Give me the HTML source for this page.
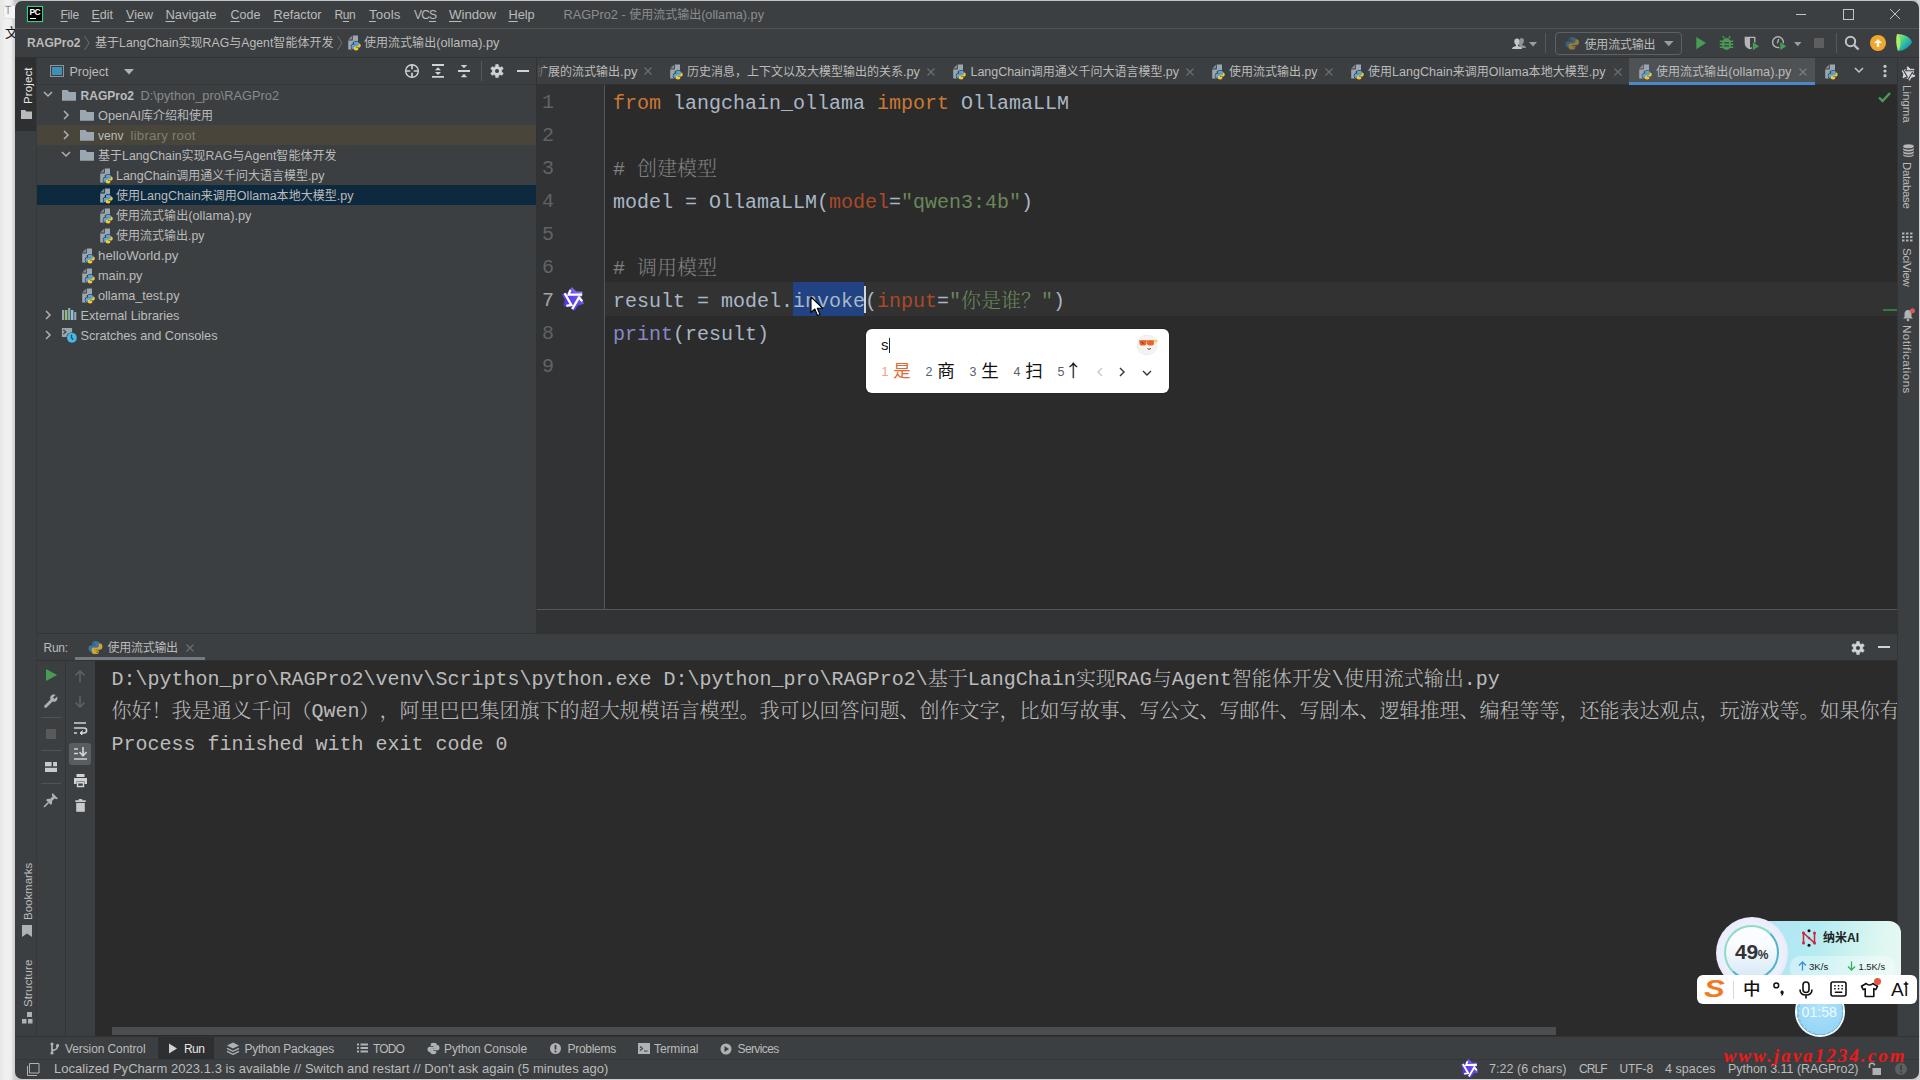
<!DOCTYPE html>
<html lang="zh"><head><meta charset="utf-8"><title>RAGPro2 - 使用流式输出(ollama).py</title>
<style>
html,body{margin:0;padding:0}
body{width:1920px;height:1080px;overflow:hidden;position:relative;background:#ebebeb;font-family:"Liberation Sans","Noto Sans CJK SC",sans-serif;font-size:12.5px;color:#bbb;text-spacing-trim:space-all}
#desk{position:absolute;left:0;top:0;width:1920px;height:1080px;background:linear-gradient(90deg,#e6e6e6 0,#f1f1f1 6px,#eeeeee 11px,#cbcbcb 15px,#cdcecf 15px)}
#win{position:absolute;left:15px;top:1px;width:1904px;height:1077.5px;border-radius:7px;background:#3c3f41;overflow:hidden}
#in{position:absolute;left:-15px;top:-1px;width:1920px;height:1080px}
.r{position:absolute;display:block}
.t{position:absolute;white-space:pre;color:#bbb;font-size:12.5px}
.c{font-size:12px}
.b{font-weight:bold}
.g{color:#8a8a8a}
.m{font-family:"Liberation Mono","Noto Serif CJK SC",monospace;font-size:20px;font-weight:300}
.m .c{font-size:20px;position:relative;top:1.200px}
.u{text-decoration:underline;text-underline-offset:1.5px;text-decoration-thickness:1px}
.k{color:#cc7832}.s{color:#6a8759}.cm{color:#808080}.p{color:#aa4926}.bi{color:#8888c6}
.code{color:#a9b7c6}
.v{position:absolute;white-space:pre;font-size:12px;color:#bbb;line-height:16px;transform-origin:0 0}
</style></head><body>
<div id="desk"></div><div class="r" style="left:14px;top:0;width:1906px;height:2px;background:#c2c3c7"></div><div class="r" style="left:14px;top:1077px;width:1906px;height:3px;background:#cdcecf"></div><div class="r" style="left:1917px;top:0;width:3px;height:1080px;background:#d2d3d5"></div>
<div class="r" style="left:3px;top:5px;width:11px;height:12px;border:1px solid #e0e0e0;border-radius:2px;background:#f4f4f4"></div>
<div class="t" style="left:5px;top:4px;line-height:14px;font-size:10px;color:#8a8a8a">T</div>
<div class="t" style="left:5px;top:25px;line-height:16px;font-size:13px;color:#111;width:10px;overflow:hidden"><span style="font-size:13px">文</span></div>
<div id="win"><div id="in">
<div class="r" style="left:15px;top:28px;width:1905px;height:1px;background:#515354;"></div>
<div class="r" style="left:27px;top:6px;width:14px;height:14px;border:1px solid #3ec98d;background:#000;box-shadow:0 0 0 .5px #1d6f50"></div>
<div class="t b" style="left:29.500px;top:8.300px;line-height:8px;font-size:8.500px;color:#fff;letter-spacing:-.6px">PC</div>
<div class="r" style="left:30px;top:17.5px;width:6px;height:1.2px;background:#fff;"></div>
<div class="t " style="left:60.5px;top:5.0px;line-height:20px;;font-size:12.0px;letter-spacing:-0.246px"><span class="u">F</span>ile</div>
<div class="t " style="left:91.5px;top:5.0px;line-height:20px;;font-size:12.5px;letter-spacing:-0.013px"><span class="u">E</span>dit</div>
<div class="t " style="left:126px;top:5.0px;line-height:20px;;font-size:12.5px;letter-spacing:0.031px"><span class="u">V</span>iew</div>
<div class="t " style="left:165.5px;top:5.0px;line-height:20px;;font-size:13.0px;letter-spacing:-0.042px"><span class="u">N</span>avigate</div>
<div class="t " style="left:230.5px;top:5.0px;line-height:20px;;font-size:12.5px;letter-spacing:0.031px"><span class="u">C</span>ode</div>
<div class="t " style="left:273.5px;top:5.0px;line-height:20px;;font-size:12.75px;letter-spacing:-0.027px"><span class="u">R</span>efactor</div>
<div class="t " style="left:334.5px;top:5.0px;line-height:20px;;font-size:12.0px;letter-spacing:-0.419px">R<span class="u">u</span>n</div>
<div class="t " style="left:369px;top:5.0px;line-height:20px;;font-size:13.25px;letter-spacing:0.125px"><span class="u">T</span>ools</div>
<div class="t " style="left:414px;top:5.0px;line-height:20px;;font-size:12.0px;letter-spacing:-0.875px">VC<span class="u">S</span></div>
<div class="t " style="left:449px;top:5.0px;line-height:20px;;font-size:13.25px;letter-spacing:-0.026px"><span class="u">W</span>indow</div>
<div class="t " style="left:508.5px;top:5.0px;line-height:20px;;font-size:12.75px;letter-spacing:-0.067px"><span class="u">H</span>elp</div>
<div class="t " style="left:563.5px;top:5.0px;line-height:20px;color:#8b8d8e;font-size:12.75px;letter-spacing:-0.018px">RAGPro2 - <span class="c">使用流式输出</span>(ollama).py</div>
<div class="r" style="left:1796px;top:14px;width:10px;height:1px;background:#c4c4c4;"></div>
<div class="r" style="left:1843px;top:9px;width:8.6px;height:8.6px;border:1px solid #c4c4c4"></div>
<svg class="r" style="left:1890px;top:9px;" width="10" height="10" viewBox="0 0 10 10"><path d="M0 0 L10 10 M10 0 L0 10" stroke="#c4c4c4" stroke-width="1"/></svg>
<div class="r" style="left:15px;top:57px;width:1905px;height:1px;background:#323232;"></div>
<div class="t b" style="left:27px;top:33.0px;line-height:20px;;font-size:12.0px;letter-spacing:0.024px">RAGPro2</div>
<svg class="r" style="left:83px;top:35px;" width="8" height="16" viewBox="0 0 8 16"><path d="M1.500 1 L6 8 L1.500 15" fill="none" stroke="#6b6e70" stroke-width="1"/></svg>
<div class="t " style="left:95px;top:33.0px;line-height:20px;;font-size:12.25px;letter-spacing:0.023px"><span class="c">基于</span>LangChain<span class="c">实现</span>RAG<span class="c">与</span>Agent<span class="c">智能体开发</span></div>
<svg class="r" style="left:336px;top:35px;" width="8" height="16" viewBox="0 0 8 16"><path d="M1.500 1 L6 8 L1.500 15" fill="none" stroke="#6b6e70" stroke-width="1"/></svg>
<svg class="r" style="left:347px;top:35px;" width="16" height="16" viewBox="0 0 16 16"><path d="M1.200 4.600 L5 .8 V4.600 Z" fill="#9aa7b0" opacity=".75"/><path d="M5.800 .6 H11 V7 H5.800 V14.500 H1.200 V5.400 H5.800 Z" fill="#9aa7b0"/><g transform="translate(4.200 6.200) scale(.62)"><path d="M7.900 1 C5 1 4.600 2.200 4.600 3.300 V5 h3.500 v.7 H3.200 C1.800 5.700 .6 6.800 .6 9 s1.100 3.300 2.400 3.300 h1.400 v-1.900 c0-1.400 1.100-2.500 2.500-2.500 h3.200 c1.100 0 2-.9 2-2 V3.300 C12.100 2.200 11 1 7.900 1z" fill="#5aa3d6" stroke="#3c3f41" stroke-width="2.600" paint-order="stroke"/><path d="M8.100 15 c2.900 0 3.300-1.200 3.300-2.300 V11 H7.900 v-.7 h4.900 c1.400 0 2.600-1.100 2.600-3.300 s-1.100-3.300-2.400-3.300 h-1.400 v1.900 c0 1.400-1.100 2.500-2.500 2.500 H5.900 c-1.100 0-2 .9-2 2 v2.600 C3.900 13.800 5 15 8.100 15z" fill="#f1c83c" stroke="#3c3f41" stroke-width="1.200" paint-order="stroke"/><path d="M7.900 1 C5 1 4.600 2.200 4.600 3.300 V5 h3.500 v.7 H3.200 C1.800 5.700 .6 6.800 .6 9 s1.100 3.300 2.400 3.300 h1.400 v-1.900 c0-1.400 1.100-2.500 2.500-2.500 h3.200 c1.100 0 2-.9 2-2 V3.300 C12.100 2.200 11 1 7.900 1z" fill="#5aa3d6"/></g></svg>
<div class="t " style="left:364px;top:33.0px;line-height:20px;;font-size:12.75px;letter-spacing:0.026px"><span class="c">使用流式输出</span>(ollama).py</div>
<svg class="r" style="left:1510.8px;top:36px;" width="16" height="15" viewBox="0 0 16 15"><path d="M10.500 2 c1.600 0 2.500 1.300 2.500 2.800 s-.8 3-1.800 3.400 v.8 c2 .4 3.800 1.300 3.800 3 H9.500 c0-1.500-.8-2.500-2-3 .9-.8 1-2 1-3.400 C8.500 4 9 2 10.500 2z" fill="#8f9294"/><path d="M6 2.500 c1.700 0 2.700 1.300 2.700 3 s-.9 3.200-1.700 3.600 v.8 c2.200 .5 4 1.300 4 3.100 H1 c0-1.800 1.800-2.600 4-3.100 v-.8 C4.200 8.700 3.300 7.200 3.300 5.500 s1-3 2.700-3z" fill="#c4c6c8"/></svg>
<svg class="r" style="left:1529px;top:41.8px;" width="8" height="5" viewBox="0 0 8 5"><path d="M0 0 H8 L4 4.500 Z" fill="#9a9da0"/></svg>
<div class="r" style="left:1545px;top:33px;width:1px;height:20px;background:#555759;"></div>
<div class="r" style="left:1555px;top:32px;width:125px;height:20.500px;border:1px solid #5e6163;border-radius:4px"></div>
<svg class="r" style="left:1564.5px;top:36px;opacity:0.5;" width="14.5" height="14.5" viewBox="0 0 16 16"><path d="M7.9 1 C5 1 4.6 2.2 4.6 3.3 V5 h3.5 v.7 H3.2 C1.8 5.700 .6 6.800 .6 9 s1.100 3.300 2.400 3.300 h1.400 v-1.900 c0-1.400 1.100-2.500 2.500-2.500 h3.200 c1.100 0 2-.9 2-2 V3.300 C12.100 2.200 11 1 7.900 1z" fill="#3d7fb5"/><circle cx="6.2" cy="3" r=".7" fill="#3c3f41"/><path d="M8.100 15 c2.900 0 3.300-1.200 3.300-2.300 V11 H7.900 v-.7 h4.900 c1.400 0 2.600-1.100 2.600-3.300 s-1.100-3.300-2.400-3.300 h-1.400 v1.900 c0 1.400-1.100 2.500-2.500 2.500 H5.900 c-1.100 0-2 .9-2 2 v2.600 C3.900 13.800 5 15 8.100 15z" fill="#e5b93a"/><circle cx="9.8" cy="13" r=".7" fill="#3c3f41"/></svg>
<div class="t " style="left:1584.5px;top:35.0px;line-height:20px;;font-size:12.5px;letter-spacing:-0.185px"><span class="c">使用流式输出</span></div>
<svg class="r" style="left:1663.5px;top:41px;" width="10" height="6" viewBox="0 0 10 6"><path d="M0 0 H9.500 L4.750 5.200 Z" fill="#9a9da0"/></svg>
<svg class="r" style="left:1695.5px;top:37px;" width="11" height="12.5" viewBox="0 0 11 12.5"><path d="M.3 0 L10 6.100 L.3 12.200 Z" fill="#499c54"/></svg>
<svg class="r" style="left:1719px;top:35px;" width="15" height="16" viewBox="0 0 15 16"><path d="M5.300 3.300 L3.800 1 M9.700 3.300 L11.200 1" stroke="#499c54" stroke-width="1.300"/><ellipse cx="7.500" cy="9" rx="4.500" ry="6" fill="#499c54"/><path d="M.8 6.300 H4 M.8 9.300 H4 M.8 12.300 H4 M11 6.300 H14.200 M11 9.300 H14.200 M11 12.300 H14.200" stroke="#499c54" stroke-width="1.500"/><path d="M5 7.800 H10 M5 10.800 H10" stroke="#3c3f41" stroke-width="1.300"/></svg>
<svg class="r" style="left:1744px;top:36px;" width="17" height="16" viewBox="0 0 17 16"><path d="M1.300 1.300 H10.800 V6.500 C10.800 9.500 8.500 11.800 6 12.600 C3.500 11.800 1.300 9.500 1.300 6.500 Z" fill="#3c3f41" stroke="#b4b6b8" stroke-width="1.300"/><path d="M1.300 1.300 H6 V12.600 C3.500 11.800 1.300 9.500 1.300 6.500 Z" fill="#b4b6b8"/><path d="M8.300 5.500 L16 10.200 L8.300 15 Z" fill="#499c54" stroke="#3c3f41" stroke-width="1"/></svg>
<svg class="r" style="left:1771px;top:35px;" width="17" height="17" viewBox="0 0 17 17"><circle cx="7" cy="7.200" r="5.400" fill="none" stroke="#b4b6b8" stroke-width="1.400"/><path d="M7.800 4 L6.300 8.300" fill="none" stroke="#b4b6b8" stroke-width="1.300"/><path d="M8.800 6.500 L16 11.200 L8.800 16 Z" fill="#499c54" stroke="#3c3f41" stroke-width="1"/></svg>
<svg class="r" style="left:1793.5px;top:42px;" width="8" height="5" viewBox="0 0 8 5"><path d="M0 0 H7.500 L3.750 4.200 Z" fill="#9a9da0"/></svg>
<div class="r" style="left:1814px;top:38px;width:10px;height:10px;background:#5c5e60;"></div>
<div class="r" style="left:1835.5px;top:33px;width:1px;height:20px;background:#555759;"></div>
<svg class="r" style="left:1844px;top:35px;" width="16" height="16" viewBox="0 0 16 16"><circle cx="6.500" cy="6.500" r="4.700" fill="none" stroke="#c0c2c4" stroke-width="2"/><path d="M10 10 L14.500 14.500" stroke="#c0c2c4" stroke-width="2.400"/></svg>
<div class="r" style="left:1870px;top:34.5px;width:16px;height:16px;border-radius:50%;background:#f0a732"></div>
<svg class="r" style="left:1873px;top:38px;" width="10" height="10" viewBox="0 0 10 10"><path d="M5 1 L9 5 H6.200 V9 H3.800 V5 H1 Z" fill="#fff8e0"/></svg>
<svg class="r" style="left:1895px;top:33px;" width="18" height="19" viewBox="0 0 18 19"><defs><linearGradient id="cg" x1="0" y1="0" x2="1" y2="1"><stop offset="0" stop-color="#b7ec5a"/><stop offset=".5" stop-color="#2fc3a0"/><stop offset="1" stop-color="#1767c9"/></linearGradient></defs><path d="M2 1 C10 1 16 5 17 9.500 C14 14 9 18 3 18 C1 12 1 6 2 1z" fill="url(#cg)"/><path d="M2 1 C6 5 7 12 3 18 C1 12 1 6 2 1z" fill="#c6f25e" opacity=".8"/></svg>
<div class="r" style="left:15px;top:58px;width:21.3px;height:73px;background:#2d2f30;"></div>
<div class="v" style="left:19.5px;top:103.5px;transform:rotate(-90deg);font-size:11.5px;letter-spacing:0.124px;color:#e8e8e8">Project</div>
<svg class="r" style="left:21px;top:110px;" width="11" height="9" viewBox="0 0 11 9"><path d="M0 0 H4.200 L5.300 1.600 H11 V9 H0 Z" fill="#b8babc"/></svg>
<div class="v" style="left:19.5px;top:920px;transform:rotate(-90deg);font-size:11.5px;letter-spacing:-0.027px;">Bookmarks</div>
<svg class="r" style="left:22px;top:925px;" width="10" height="12" viewBox="0 0 10 12"><path d="M0 0 H10 V12 L5 8.500 L0 12 Z" fill="#afb1b3"/></svg>
<div class="v" style="left:19.5px;top:1007px;transform:rotate(-90deg);font-size:11.5px;letter-spacing:0.086px;">Structure</div>
<svg class="r" style="left:22px;top:1012px;" width="11" height="12" viewBox="0 0 11 12"><rect x="5" y="0" width="5" height="5" fill="#afb1b3"/><rect x="0" y="7" width="4.500" height="4.500" fill="#afb1b3"/><rect x="6" y="7" width="4.500" height="4.500" fill="#afb1b3"/></svg>
<div class="r" style="left:36px;top:58px;width:1px;height:978px;background:#36393b;"></div>
<div class="r" style="left:50px;top:65px;width:12px;height:10px;border:1.500px solid #8d959b;background:#3f8fb8;box-shadow:inset 0 0 0 1px #3c3f41"></div>
<div class="t " style="left:69.5px;top:62.0px;line-height:20px;;font-size:12.5px;letter-spacing:0.014px">Project</div>
<svg class="r" style="left:124px;top:69px;" width="10" height="6" viewBox="0 0 10 6"><path d="M0 0 H10 L5 5.500 Z" fill="#afb1b3"/></svg>
<svg class="r" style="left:404px;top:63px;" width="16" height="16" viewBox="0 0 16 16"><circle cx="8" cy="8" r="6.300" fill="none" stroke="#d0d2d4" stroke-width="1.400"/><path d="M8 1.500 V6.300 M8 9.700 V14.500 M1.500 8 H6.300 M9.700 8 H14.500" stroke="#d0d2d4" stroke-width="1.700"/></svg>
<svg class="r" style="left:432px;top:63px;" width="12" height="16" viewBox="0 0 12 16"><path d="M0 2 H12 M0 13.800 H12" stroke="#d0d2d4" stroke-width="1.800"/><path d="M6 4.300 L9 7.200 H3 Z M6 12 L9 9 H3 Z" fill="#d0d2d4"/></svg>
<svg class="r" style="left:458px;top:63px;" width="12" height="16" viewBox="0 0 12 16"><path d="M0 8 H12" stroke="#d0d2d4" stroke-width="1.900"/><path d="M6 5.200 L9.200 2 H2.800 Z M6 10.800 L9.200 14.200 H2.800 Z" fill="#d0d2d4"/></svg>
<div class="r" style="left:480.5px;top:61px;width:1px;height:20px;background:#55585a;"></div>
<svg class="r" style="left:490px;top:64px;" width="14" height="14" viewBox="0 0 14 14"><path d="M5.00 2.75 L5.55 2.53 L5.72 0.52 L8.28 0.52 L8.45 2.53 L9.68 3.14 L10.14 3.51 L11.97 2.66 L13.25 4.87 L11.60 6.02 L11.68 7.39 L11.60 7.98 L13.25 9.13 L11.97 11.34 L10.14 10.49 L9.00 11.25 L8.45 11.47 L8.28 13.48 L5.72 13.48 L5.55 11.47 L4.32 10.86 L3.86 10.49 L2.03 11.34 L0.75 9.13 L2.40 7.98 L2.32 6.61 L2.40 6.02 L0.75 4.87 L2.03 2.66 L3.86 3.51Z" fill="#d0d2d4" stroke="#d0d2d4" stroke-width=".6" stroke-linejoin="round"/><circle cx="7" cy="7" r="2" fill="#3c3f41"/></svg>
<div class="r" style="left:516.5px;top:69.8px;width:12.5px;height:2.2px;background:#d0d2d4;"></div>
<div class="r" style="left:37px;top:84px;width:500px;height:1px;background:#36393b;"></div>
<div class="r" style="left:37px;top:125px;width:499px;height:20px;background:#49453a;"></div>
<div class="r" style="left:37px;top:185px;width:499px;height:20px;background:#0d293e;"></div>
<svg class="r" style="left:43px;top:90.3px;" width="10" height="8" viewBox="0 0 10 8"><path d="M1 2 L5 6 L9 2" fill="none" stroke="#afb1b3" stroke-width="1.5"/></svg>
<svg class="r" style="left:62px;top:89.5px;" width="14" height="11" viewBox="0 0 14 11"><path d="M0 0 H5.500 L7 2 H14 V10.700 H0 Z" fill="#9aa7b0"/></svg>
<div class="t b" style="left:80.5px;top:85.5px;line-height:20px;;font-size:12.0px;letter-spacing:0.024px">RAGPro2</div>
<div class="t g" style="left:140.5px;top:85.5px;line-height:20px;;font-size:12.75px;letter-spacing:0.014px">D:\python_pro\RAGPro2</div>
<svg class="r" style="left:62px;top:110px;" width="8" height="10" viewBox="0 0 8 10"><path d="M2 1 L6 5 L2 9" fill="none" stroke="#afb1b3" stroke-width="1.5"/></svg>
<svg class="r" style="left:80px;top:109.5px;" width="14" height="11" viewBox="0 0 14 11"><path d="M0 0 H5.500 L7 2 H14 V10.700 H0 Z" fill="#9aa7b0"/></svg>
<div class="t " style="left:98px;top:105.5px;line-height:20px;;font-size:12.75px;letter-spacing:-0.023px">OpenAI<span class="c">库介绍和使用</span></div>
<svg class="r" style="left:62px;top:130px;" width="8" height="10" viewBox="0 0 8 10"><path d="M2 1 L6 5 L2 9" fill="none" stroke="#afb1b3" stroke-width="1.5"/></svg>
<svg class="r" style="left:80px;top:129.5px;" width="14" height="11" viewBox="0 0 14 11"><path d="M0 0 H5.500 L7 2 H14 V10.700 H0 Z" fill="#9aa7b0"/></svg>
<div class="t " style="left:98px;top:125.5px;line-height:20px;;font-size:12.0px;letter-spacing:0.04px">venv</div>
<div class="t g" style="left:130.5px;top:125.5px;line-height:20px;color:#7d7d78;font-size:13.25px;letter-spacing:0.209px">library root</div>
<svg class="r" style="left:61px;top:150.3px;" width="10" height="8" viewBox="0 0 10 8"><path d="M1 2 L5 6 L9 2" fill="none" stroke="#afb1b3" stroke-width="1.5"/></svg>
<svg class="r" style="left:80px;top:149.5px;" width="14" height="11" viewBox="0 0 14 11"><path d="M0 0 H5.500 L7 2 H14 V10.700 H0 Z" fill="#9aa7b0"/></svg>
<div class="t " style="left:98px;top:145.5px;line-height:20px;;font-size:12.25px;letter-spacing:0.023px"><span class="c">基于</span>LangChain<span class="c">实现</span>RAG<span class="c">与</span>Agent<span class="c">智能体开发</span></div>
<svg class="r" style="left:99px;top:167.5px;" width="16" height="16" viewBox="0 0 16 16"><path d="M1.200 4.600 L5 .8 V4.600 Z" fill="#9aa7b0" opacity=".75"/><path d="M5.800 .6 H11 V7 H5.800 V14.500 H1.200 V5.400 H5.800 Z" fill="#9aa7b0"/><g transform="translate(4.200 6.200) scale(.62)"><path d="M7.900 1 C5 1 4.600 2.200 4.600 3.300 V5 h3.500 v.7 H3.200 C1.800 5.700 .6 6.800 .6 9 s1.100 3.300 2.400 3.300 h1.400 v-1.900 c0-1.400 1.100-2.500 2.500-2.500 h3.200 c1.100 0 2-.9 2-2 V3.300 C12.100 2.200 11 1 7.900 1z" fill="#5aa3d6" stroke="#3c3f41" stroke-width="2.600" paint-order="stroke"/><path d="M8.100 15 c2.900 0 3.300-1.200 3.300-2.300 V11 H7.900 v-.7 h4.900 c1.400 0 2.600-1.100 2.600-3.300 s-1.100-3.300-2.400-3.300 h-1.400 v1.900 c0 1.400-1.100 2.500-2.500 2.500 H5.900 c-1.100 0-2 .9-2 2 v2.600 C3.900 13.800 5 15 8.100 15z" fill="#f1c83c" stroke="#3c3f41" stroke-width="1.200" paint-order="stroke"/><path d="M7.900 1 C5 1 4.600 2.200 4.600 3.300 V5 h3.500 v.7 H3.200 C1.800 5.700 .6 6.800 .6 9 s1.100 3.300 2.400 3.300 h1.400 v-1.900 c0-1.400 1.100-2.500 2.500-2.500 h3.200 c1.100 0 2-.9 2-2 V3.300 C12.100 2.200 11 1 7.900 1z" fill="#5aa3d6"/></g></svg>
<div class="t " style="left:116px;top:165.5px;line-height:20px;;font-size:12.5px;letter-spacing:-0.03px">LangChain<span class="c">调用通义千问大语言模型</span>.py</div>
<svg class="r" style="left:99px;top:187.5px;" width="16" height="16" viewBox="0 0 16 16"><path d="M1.200 4.600 L5 .8 V4.600 Z" fill="#9aa7b0" opacity=".75"/><path d="M5.800 .6 H11 V7 H5.800 V14.500 H1.200 V5.400 H5.800 Z" fill="#9aa7b0"/><g transform="translate(4.200 6.200) scale(.62)"><path d="M7.900 1 C5 1 4.600 2.200 4.600 3.300 V5 h3.500 v.7 H3.200 C1.800 5.700 .6 6.800 .6 9 s1.100 3.300 2.400 3.300 h1.400 v-1.900 c0-1.400 1.100-2.500 2.500-2.500 h3.200 c1.100 0 2-.9 2-2 V3.300 C12.100 2.200 11 1 7.900 1z" fill="#5aa3d6" stroke="#0d293e" stroke-width="2.600" paint-order="stroke"/><path d="M8.100 15 c2.900 0 3.300-1.200 3.300-2.300 V11 H7.900 v-.7 h4.900 c1.400 0 2.600-1.100 2.600-3.300 s-1.100-3.300-2.400-3.300 h-1.400 v1.900 c0 1.400-1.100 2.500-2.500 2.500 H5.900 c-1.100 0-2 .9-2 2 v2.600 C3.900 13.800 5 15 8.100 15z" fill="#f1c83c" stroke="#0d293e" stroke-width="1.200" paint-order="stroke"/><path d="M7.900 1 C5 1 4.600 2.200 4.600 3.300 V5 h3.500 v.7 H3.200 C1.800 5.700 .6 6.800 .6 9 s1.100 3.300 2.400 3.300 h1.400 v-1.900 c0-1.400 1.100-2.500 2.500-2.500 h3.200 c1.100 0 2-.9 2-2 V3.300 C12.100 2.200 11 1 7.900 1z" fill="#5aa3d6"/></g></svg>
<div class="t " style="left:116px;top:185.5px;line-height:20px;;font-size:12.5px;letter-spacing:0.026px"><span class="c">使用</span>LangChain<span class="c">来调用</span>Ollama<span class="c">本地大模型</span>.py</div>
<svg class="r" style="left:99px;top:207.5px;" width="16" height="16" viewBox="0 0 16 16"><path d="M1.200 4.600 L5 .8 V4.600 Z" fill="#9aa7b0" opacity=".75"/><path d="M5.800 .6 H11 V7 H5.800 V14.500 H1.200 V5.400 H5.800 Z" fill="#9aa7b0"/><g transform="translate(4.200 6.200) scale(.62)"><path d="M7.900 1 C5 1 4.600 2.200 4.600 3.300 V5 h3.500 v.7 H3.200 C1.800 5.700 .6 6.800 .6 9 s1.100 3.300 2.400 3.300 h1.400 v-1.900 c0-1.400 1.100-2.500 2.500-2.500 h3.200 c1.100 0 2-.9 2-2 V3.300 C12.100 2.200 11 1 7.900 1z" fill="#5aa3d6" stroke="#3c3f41" stroke-width="2.600" paint-order="stroke"/><path d="M8.100 15 c2.900 0 3.300-1.200 3.300-2.300 V11 H7.900 v-.7 h4.900 c1.400 0 2.600-1.100 2.600-3.300 s-1.100-3.300-2.400-3.300 h-1.400 v1.900 c0 1.400-1.100 2.500-2.500 2.500 H5.900 c-1.100 0-2 .9-2 2 v2.600 C3.900 13.800 5 15 8.100 15z" fill="#f1c83c" stroke="#3c3f41" stroke-width="1.200" paint-order="stroke"/><path d="M7.900 1 C5 1 4.600 2.200 4.600 3.300 V5 h3.500 v.7 H3.200 C1.800 5.700 .6 6.800 .6 9 s1.100 3.300 2.400 3.300 h1.400 v-1.900 c0-1.400 1.100-2.500 2.500-2.500 h3.200 c1.100 0 2-.9 2-2 V3.300 C12.100 2.200 11 1 7.900 1z" fill="#5aa3d6"/></g></svg>
<div class="t " style="left:116px;top:205.5px;line-height:20px;;font-size:12.75px;letter-spacing:0.026px"><span class="c">使用流式输出</span>(ollama).py</div>
<svg class="r" style="left:99px;top:227.5px;" width="16" height="16" viewBox="0 0 16 16"><path d="M1.200 4.600 L5 .8 V4.600 Z" fill="#9aa7b0" opacity=".75"/><path d="M5.800 .6 H11 V7 H5.800 V14.500 H1.200 V5.400 H5.800 Z" fill="#9aa7b0"/><g transform="translate(4.200 6.200) scale(.62)"><path d="M7.900 1 C5 1 4.600 2.200 4.600 3.300 V5 h3.500 v.7 H3.200 C1.800 5.700 .6 6.800 .6 9 s1.100 3.300 2.400 3.300 h1.400 v-1.900 c0-1.400 1.100-2.500 2.500-2.500 h3.200 c1.100 0 2-.9 2-2 V3.300 C12.100 2.200 11 1 7.900 1z" fill="#5aa3d6" stroke="#3c3f41" stroke-width="2.600" paint-order="stroke"/><path d="M8.100 15 c2.900 0 3.300-1.200 3.300-2.300 V11 H7.900 v-.7 h4.900 c1.400 0 2.600-1.100 2.600-3.300 s-1.100-3.300-2.400-3.300 h-1.400 v1.900 c0 1.400-1.100 2.500-2.500 2.500 H5.900 c-1.100 0-2 .9-2 2 v2.600 C3.900 13.800 5 15 8.100 15z" fill="#f1c83c" stroke="#3c3f41" stroke-width="1.200" paint-order="stroke"/><path d="M7.900 1 C5 1 4.600 2.200 4.600 3.300 V5 h3.500 v.7 H3.200 C1.800 5.700 .6 6.800 .6 9 s1.100 3.300 2.400 3.300 h1.400 v-1.900 c0-1.400 1.100-2.500 2.500-2.500 h3.200 c1.100 0 2-.9 2-2 V3.300 C12.100 2.200 11 1 7.900 1z" fill="#5aa3d6"/></g></svg>
<div class="t " style="left:116px;top:225.5px;line-height:20px;;font-size:12.25px;letter-spacing:0.017px"><span class="c">使用流式输出</span>.py</div>
<svg class="r" style="left:81px;top:247.5px;" width="16" height="16" viewBox="0 0 16 16"><path d="M1.200 4.600 L5 .8 V4.600 Z" fill="#9aa7b0" opacity=".75"/><path d="M5.800 .6 H11 V7 H5.800 V14.500 H1.200 V5.400 H5.800 Z" fill="#9aa7b0"/><g transform="translate(4.200 6.200) scale(.62)"><path d="M7.900 1 C5 1 4.600 2.200 4.600 3.300 V5 h3.500 v.7 H3.200 C1.800 5.700 .6 6.800 .6 9 s1.100 3.300 2.400 3.300 h1.400 v-1.900 c0-1.400 1.100-2.500 2.500-2.500 h3.200 c1.100 0 2-.9 2-2 V3.300 C12.100 2.200 11 1 7.900 1z" fill="#5aa3d6" stroke="#3c3f41" stroke-width="2.600" paint-order="stroke"/><path d="M8.100 15 c2.900 0 3.300-1.200 3.300-2.300 V11 H7.900 v-.7 h4.900 c1.400 0 2.600-1.100 2.600-3.300 s-1.100-3.300-2.400-3.300 h-1.400 v1.900 c0 1.400-1.100 2.500-2.500 2.500 H5.900 c-1.100 0-2 .9-2 2 v2.600 C3.900 13.800 5 15 8.100 15z" fill="#f1c83c" stroke="#3c3f41" stroke-width="1.200" paint-order="stroke"/><path d="M7.900 1 C5 1 4.600 2.200 4.600 3.300 V5 h3.500 v.7 H3.200 C1.800 5.700 .6 6.800 .6 9 s1.100 3.300 2.400 3.300 h1.400 v-1.900 c0-1.400 1.100-2.500 2.500-2.500 h3.200 c1.100 0 2-.9 2-2 V3.300 C12.100 2.200 11 1 7.900 1z" fill="#5aa3d6"/></g></svg>
<div class="t " style="left:98px;top:245.5px;line-height:20px;;font-size:13.25px;letter-spacing:0.037px">helloWorld.py</div>
<svg class="r" style="left:81px;top:267.5px;" width="16" height="16" viewBox="0 0 16 16"><path d="M1.200 4.600 L5 .8 V4.600 Z" fill="#9aa7b0" opacity=".75"/><path d="M5.800 .6 H11 V7 H5.800 V14.500 H1.200 V5.400 H5.800 Z" fill="#9aa7b0"/><g transform="translate(4.200 6.200) scale(.62)"><path d="M7.900 1 C5 1 4.600 2.200 4.600 3.300 V5 h3.500 v.7 H3.200 C1.800 5.700 .6 6.800 .6 9 s1.100 3.300 2.400 3.300 h1.400 v-1.900 c0-1.400 1.100-2.500 2.500-2.500 h3.200 c1.100 0 2-.9 2-2 V3.300 C12.100 2.200 11 1 7.900 1z" fill="#5aa3d6" stroke="#3c3f41" stroke-width="2.600" paint-order="stroke"/><path d="M8.100 15 c2.900 0 3.300-1.200 3.300-2.300 V11 H7.900 v-.7 h4.900 c1.400 0 2.600-1.100 2.600-3.300 s-1.100-3.300-2.400-3.300 h-1.400 v1.900 c0 1.400-1.100 2.500-2.500 2.500 H5.900 c-1.100 0-2 .9-2 2 v2.600 C3.900 13.800 5 15 8.100 15z" fill="#f1c83c" stroke="#3c3f41" stroke-width="1.200" paint-order="stroke"/><path d="M7.900 1 C5 1 4.600 2.200 4.600 3.300 V5 h3.500 v.7 H3.200 C1.800 5.700 .6 6.800 .6 9 s1.100 3.300 2.400 3.300 h1.400 v-1.900 c0-1.400 1.100-2.500 2.500-2.500 h3.200 c1.100 0 2-.9 2-2 V3.300 C12.100 2.200 11 1 7.900 1z" fill="#5aa3d6"/></g></svg>
<div class="t " style="left:98px;top:265.5px;line-height:20px;;font-size:12.75px;letter-spacing:-0.024px">main.py</div>
<svg class="r" style="left:81px;top:287.5px;" width="16" height="16" viewBox="0 0 16 16"><path d="M1.200 4.600 L5 .8 V4.600 Z" fill="#9aa7b0" opacity=".75"/><path d="M5.800 .6 H11 V7 H5.800 V14.500 H1.200 V5.400 H5.800 Z" fill="#9aa7b0"/><g transform="translate(4.200 6.200) scale(.62)"><path d="M7.900 1 C5 1 4.600 2.200 4.600 3.300 V5 h3.500 v.7 H3.200 C1.800 5.700 .6 6.800 .6 9 s1.100 3.300 2.400 3.300 h1.400 v-1.900 c0-1.400 1.100-2.500 2.500-2.500 h3.200 c1.100 0 2-.9 2-2 V3.300 C12.100 2.200 11 1 7.900 1z" fill="#5aa3d6" stroke="#3c3f41" stroke-width="2.600" paint-order="stroke"/><path d="M8.100 15 c2.900 0 3.300-1.200 3.300-2.300 V11 H7.900 v-.7 h4.900 c1.400 0 2.600-1.100 2.600-3.300 s-1.100-3.300-2.400-3.300 h-1.400 v1.900 c0 1.400-1.100 2.500-2.500 2.500 H5.900 c-1.100 0-2 .9-2 2 v2.600 C3.900 13.800 5 15 8.100 15z" fill="#f1c83c" stroke="#3c3f41" stroke-width="1.200" paint-order="stroke"/><path d="M7.900 1 C5 1 4.600 2.200 4.600 3.300 V5 h3.500 v.7 H3.200 C1.800 5.700 .6 6.800 .6 9 s1.100 3.300 2.400 3.300 h1.400 v-1.900 c0-1.400 1.100-2.500 2.500-2.500 h3.200 c1.100 0 2-.9 2-2 V3.300 C12.100 2.200 11 1 7.900 1z" fill="#5aa3d6"/></g></svg>
<div class="t " style="left:98px;top:285.5px;line-height:20px;;font-size:12.75px;letter-spacing:-0.053px">ollama_test.py</div>
<svg class="r" style="left:44px;top:310px;" width="8" height="10" viewBox="0 0 8 10"><path d="M2 1 L6 5 L2 9" fill="none" stroke="#afb1b3" stroke-width="1.5"/></svg>
<svg class="r" style="left:61.8px;top:308px;" width="15" height="12" viewBox="0 0 15 12"><rect x="0" y="2" width="2.200" height="10" fill="#9aa7b0"/><rect x="3" y="2" width="2.400" height="10" fill="#8fbf7a"/><rect x="6.100" y="0" width="2.200" height="12" fill="#9aa7b0"/><rect x="9" y="2" width="2.400" height="10" fill="#87c3e6"/><rect x="12.200" y="4" width="2.100" height="8" fill="#9aa7b0"/></svg>
<div class="t " style="left:80.5px;top:305.5px;line-height:20px;;font-size:12.75px;letter-spacing:-0.013px">External Libraries</div>
<svg class="r" style="left:44px;top:330px;" width="8" height="10" viewBox="0 0 8 10"><path d="M2 1 L6 5 L2 9" fill="none" stroke="#afb1b3" stroke-width="1.5"/></svg>
<svg class="r" style="left:61px;top:327px;" width="18" height="18" viewBox="0 0 18 18"><path d="M.9 1 H11.100 V10 H.9 Z" fill="#9aa7b0"/><path d="M2.300 2.800 L4.800 4.900 L2.300 7" stroke="#3c3f41" fill="none" stroke-width="1.200"/><circle cx="10.900" cy="10.750" r="5.600" fill="#3c3f41"/><circle cx="10.900" cy="10.750" r="4.900" fill="#45b8e3"/><path d="M10.500 7.800 V11 L12.300 12.600" stroke="#1e4a5c" stroke-width="1.300" fill="none"/></svg>
<div class="t " style="left:80.5px;top:325.5px;line-height:20px;;font-size:12.75px;letter-spacing:-0.056px">Scratches and Consoles</div>
<div class="r" style="left:536px;top:58px;width:1px;height:576px;background:#323232;"></div>
<div class="r" style="left:1628.5px;top:58px;width:186.5px;height:27px;background:#4e5254;"></div>
<div class="r" style="left:1628.5px;top:82px;width:186.5px;height:3px;background:#4a88c7;"></div>
<div class="r" style="left:537px;top:58px;width:120px;height:26px;overflow:hidden"><div class="t " style="left:-1px;top:4.0px;line-height:20px;;font-size:13.0px;letter-spacing:0.015px"><span class="c">扩展的流式输出</span>.py</div><div class="r" style="left:0;top:0;width:9px;height:26px;background:linear-gradient(90deg,#3c3f41,rgba(60,63,65,0))"></div></div>
<svg class="r" style="left:644px;top:67px;" width="8" height="8" viewBox="0 0 8 8"><path d="M.5 .5 L7.5 7.5 M7.5 .5 L.5 7.5" stroke="#6e7173" stroke-width="1.1"/></svg>
<svg class="r" style="left:668.5px;top:63.5px;" width="16" height="16" viewBox="0 0 16 16"><path d="M1.200 4.600 L5 .8 V4.600 Z" fill="#9aa7b0" opacity=".75"/><path d="M5.800 .6 H11 V7 H5.800 V14.500 H1.200 V5.400 H5.800 Z" fill="#9aa7b0"/><g transform="translate(4.200 6.200) scale(.62)"><path d="M7.900 1 C5 1 4.600 2.200 4.600 3.300 V5 h3.500 v.7 H3.200 C1.800 5.700 .6 6.800 .6 9 s1.100 3.300 2.400 3.300 h1.400 v-1.900 c0-1.400 1.100-2.500 2.500-2.500 h3.200 c1.100 0 2-.9 2-2 V3.300 C12.100 2.200 11 1 7.900 1z" fill="#5aa3d6" stroke="#3c3f41" stroke-width="2.600" paint-order="stroke"/><path d="M8.100 15 c2.900 0 3.300-1.200 3.300-2.300 V11 H7.900 v-.7 h4.900 c1.400 0 2.600-1.100 2.600-3.300 s-1.100-3.300-2.400-3.300 h-1.400 v1.900 c0 1.400-1.100 2.500-2.500 2.500 H5.900 c-1.100 0-2 .9-2 2 v2.600 C3.900 13.800 5 15 8.100 15z" fill="#f1c83c" stroke="#3c3f41" stroke-width="1.200" paint-order="stroke"/><path d="M7.900 1 C5 1 4.600 2.200 4.600 3.300 V5 h3.500 v.7 H3.200 C1.800 5.700 .6 6.800 .6 9 s1.100 3.300 2.400 3.300 h1.400 v-1.900 c0-1.400 1.100-2.500 2.500-2.500 h3.200 c1.100 0 2-.9 2-2 V3.300 C12.100 2.200 11 1 7.900 1z" fill="#5aa3d6"/></g></svg>
<div class="t " style="left:687px;top:62.0px;line-height:20px;;font-size:12.75px;letter-spacing:-0.002px"><span class="c">历史消息，上下文以及大模型输出的关系</span>.py</div>
<svg class="r" style="left:927px;top:67.5px;" width="8" height="8" viewBox="0 0 8 8"><path d="M.5 .5 L7.5 7.5 M7.5 .5 L.5 7.5" stroke="#6e7173" stroke-width="1.1"/></svg>
<svg class="r" style="left:951.5px;top:63.5px;" width="16" height="16" viewBox="0 0 16 16"><path d="M1.200 4.600 L5 .8 V4.600 Z" fill="#9aa7b0" opacity=".75"/><path d="M5.800 .6 H11 V7 H5.800 V14.500 H1.200 V5.400 H5.800 Z" fill="#9aa7b0"/><g transform="translate(4.200 6.200) scale(.62)"><path d="M7.900 1 C5 1 4.600 2.200 4.600 3.300 V5 h3.500 v.7 H3.200 C1.800 5.700 .6 6.800 .6 9 s1.100 3.300 2.400 3.300 h1.400 v-1.900 c0-1.400 1.100-2.500 2.500-2.500 h3.200 c1.100 0 2-.9 2-2 V3.300 C12.100 2.200 11 1 7.900 1z" fill="#5aa3d6" stroke="#3c3f41" stroke-width="2.600" paint-order="stroke"/><path d="M8.100 15 c2.900 0 3.300-1.200 3.300-2.300 V11 H7.900 v-.7 h4.900 c1.400 0 2.600-1.100 2.600-3.300 s-1.100-3.300-2.400-3.300 h-1.400 v1.900 c0 1.400-1.100 2.500-2.500 2.500 H5.900 c-1.100 0-2 .9-2 2 v2.600 C3.900 13.800 5 15 8.100 15z" fill="#f1c83c" stroke="#3c3f41" stroke-width="1.200" paint-order="stroke"/><path d="M7.900 1 C5 1 4.600 2.200 4.600 3.300 V5 h3.500 v.7 H3.200 C1.800 5.700 .6 6.800 .6 9 s1.100 3.300 2.400 3.300 h1.400 v-1.900 c0-1.400 1.100-2.500 2.500-2.500 h3.200 c1.100 0 2-.9 2-2 V3.300 C12.100 2.200 11 1 7.900 1z" fill="#5aa3d6"/></g></svg>
<div class="t " style="left:970.5px;top:62.0px;line-height:20px;;font-size:12.5px;letter-spacing:-0.03px">LangChain<span class="c">调用通义千问大语言模型</span>.py</div>
<svg class="r" style="left:1186px;top:67.5px;" width="8" height="8" viewBox="0 0 8 8"><path d="M.5 .5 L7.5 7.5 M7.5 .5 L.5 7.5" stroke="#6e7173" stroke-width="1.1"/></svg>
<svg class="r" style="left:1211px;top:63.5px;" width="16" height="16" viewBox="0 0 16 16"><path d="M1.200 4.600 L5 .8 V4.600 Z" fill="#9aa7b0" opacity=".75"/><path d="M5.800 .6 H11 V7 H5.800 V14.500 H1.200 V5.400 H5.800 Z" fill="#9aa7b0"/><g transform="translate(4.200 6.200) scale(.62)"><path d="M7.900 1 C5 1 4.600 2.200 4.600 3.300 V5 h3.500 v.7 H3.200 C1.800 5.700 .6 6.800 .6 9 s1.100 3.300 2.400 3.300 h1.400 v-1.900 c0-1.400 1.100-2.500 2.500-2.500 h3.200 c1.100 0 2-.9 2-2 V3.300 C12.100 2.200 11 1 7.900 1z" fill="#5aa3d6" stroke="#3c3f41" stroke-width="2.600" paint-order="stroke"/><path d="M8.100 15 c2.900 0 3.300-1.200 3.300-2.300 V11 H7.900 v-.7 h4.900 c1.400 0 2.600-1.100 2.600-3.300 s-1.100-3.300-2.400-3.300 h-1.400 v1.900 c0 1.400-1.100 2.500-2.500 2.500 H5.900 c-1.100 0-2 .9-2 2 v2.600 C3.900 13.800 5 15 8.100 15z" fill="#f1c83c" stroke="#3c3f41" stroke-width="1.200" paint-order="stroke"/><path d="M7.900 1 C5 1 4.600 2.200 4.600 3.300 V5 h3.500 v.7 H3.200 C1.800 5.700 .6 6.800 .6 9 s1.100 3.300 2.400 3.300 h1.400 v-1.900 c0-1.400 1.100-2.500 2.500-2.500 h3.200 c1.100 0 2-.9 2-2 V3.300 C12.100 2.200 11 1 7.900 1z" fill="#5aa3d6"/></g></svg>
<div class="t " style="left:1229px;top:62.0px;line-height:20px;;font-size:12.25px;letter-spacing:0.017px"><span class="c">使用流式输出</span>.py</div>
<svg class="r" style="left:1325px;top:67.5px;" width="8" height="8" viewBox="0 0 8 8"><path d="M.5 .5 L7.5 7.5 M7.5 .5 L.5 7.5" stroke="#6e7173" stroke-width="1.1"/></svg>
<svg class="r" style="left:1350px;top:63.5px;" width="16" height="16" viewBox="0 0 16 16"><path d="M1.200 4.600 L5 .8 V4.600 Z" fill="#9aa7b0" opacity=".75"/><path d="M5.800 .6 H11 V7 H5.800 V14.500 H1.200 V5.400 H5.800 Z" fill="#9aa7b0"/><g transform="translate(4.200 6.200) scale(.62)"><path d="M7.900 1 C5 1 4.600 2.200 4.600 3.300 V5 h3.500 v.7 H3.200 C1.800 5.700 .6 6.800 .6 9 s1.100 3.300 2.400 3.300 h1.400 v-1.900 c0-1.400 1.100-2.500 2.500-2.500 h3.200 c1.100 0 2-.9 2-2 V3.300 C12.100 2.200 11 1 7.900 1z" fill="#5aa3d6" stroke="#3c3f41" stroke-width="2.600" paint-order="stroke"/><path d="M8.100 15 c2.900 0 3.300-1.200 3.300-2.300 V11 H7.900 v-.7 h4.900 c1.400 0 2.600-1.100 2.600-3.300 s-1.100-3.300-2.400-3.300 h-1.400 v1.900 c0 1.400-1.100 2.500-2.500 2.500 H5.900 c-1.100 0-2 .9-2 2 v2.600 C3.900 13.800 5 15 8.100 15z" fill="#f1c83c" stroke="#3c3f41" stroke-width="1.200" paint-order="stroke"/><path d="M7.900 1 C5 1 4.600 2.200 4.600 3.300 V5 h3.500 v.7 H3.200 C1.800 5.700 .6 6.800 .6 9 s1.100 3.300 2.400 3.300 h1.400 v-1.900 c0-1.400 1.100-2.500 2.500-2.500 h3.200 c1.100 0 2-.9 2-2 V3.300 C12.100 2.200 11 1 7.900 1z" fill="#5aa3d6"/></g></svg>
<div class="t " style="left:1368px;top:62.0px;line-height:20px;;font-size:12.5px;letter-spacing:0.026px"><span class="c">使用</span>LangChain<span class="c">来调用</span>Ollama<span class="c">本地大模型</span>.py</div>
<svg class="r" style="left:1613.5px;top:67.5px;" width="8" height="8" viewBox="0 0 8 8"><path d="M.5 .5 L7.5 7.5 M7.5 .5 L.5 7.5" stroke="#6e7173" stroke-width="1.1"/></svg>
<svg class="r" style="left:1637.5px;top:63.5px;" width="16" height="16" viewBox="0 0 16 16"><path d="M1.200 4.600 L5 .8 V4.600 Z" fill="#9aa7b0" opacity=".75"/><path d="M5.800 .6 H11 V7 H5.800 V14.500 H1.200 V5.400 H5.800 Z" fill="#9aa7b0"/><g transform="translate(4.200 6.200) scale(.62)"><path d="M7.900 1 C5 1 4.600 2.200 4.600 3.300 V5 h3.500 v.7 H3.200 C1.800 5.700 .6 6.800 .6 9 s1.100 3.300 2.400 3.300 h1.400 v-1.900 c0-1.400 1.100-2.500 2.500-2.500 h3.200 c1.100 0 2-.9 2-2 V3.300 C12.100 2.200 11 1 7.900 1z" fill="#5aa3d6" stroke="#4e5254" stroke-width="2.600" paint-order="stroke"/><path d="M8.100 15 c2.900 0 3.300-1.200 3.300-2.300 V11 H7.900 v-.7 h4.900 c1.400 0 2.600-1.100 2.600-3.300 s-1.100-3.300-2.400-3.300 h-1.400 v1.900 c0 1.400-1.100 2.500-2.500 2.500 H5.900 c-1.100 0-2 .9-2 2 v2.600 C3.900 13.800 5 15 8.100 15z" fill="#f1c83c" stroke="#4e5254" stroke-width="1.200" paint-order="stroke"/><path d="M7.900 1 C5 1 4.600 2.200 4.600 3.300 V5 h3.500 v.7 H3.200 C1.800 5.700 .6 6.800 .6 9 s1.100 3.300 2.400 3.300 h1.400 v-1.900 c0-1.400 1.100-2.500 2.500-2.500 h3.200 c1.100 0 2-.9 2-2 V3.300 C12.100 2.200 11 1 7.900 1z" fill="#5aa3d6"/></g></svg>
<div class="t " style="left:1656px;top:62.0px;line-height:20px;;font-size:12.75px;letter-spacing:0.026px"><span class="c">使用流式输出</span>(ollama).py</div>
<svg class="r" style="left:1799px;top:67.5px;" width="8" height="8" viewBox="0 0 8 8"><path d="M.5 .5 L7.5 7.5 M7.5 .5 L.5 7.5" stroke="#7d8082" stroke-width="1.1"/></svg>
<svg class="r" style="left:1824px;top:63.5px;" width="16" height="16" viewBox="0 0 16 16"><path d="M1.200 4.600 L5 .8 V4.600 Z" fill="#9aa7b0" opacity=".75"/><path d="M5.800 .6 H11 V7 H5.800 V14.500 H1.200 V5.400 H5.800 Z" fill="#9aa7b0"/><g transform="translate(4.200 6.200) scale(.62)"><path d="M7.900 1 C5 1 4.600 2.200 4.600 3.300 V5 h3.500 v.7 H3.200 C1.800 5.700 .6 6.800 .6 9 s1.100 3.300 2.400 3.300 h1.400 v-1.900 c0-1.400 1.100-2.500 2.500-2.500 h3.200 c1.100 0 2-.9 2-2 V3.300 C12.100 2.200 11 1 7.900 1z" fill="#5aa3d6" stroke="#3c3f41" stroke-width="2.600" paint-order="stroke"/><path d="M8.100 15 c2.900 0 3.300-1.200 3.300-2.300 V11 H7.900 v-.7 h4.900 c1.400 0 2.600-1.100 2.600-3.300 s-1.100-3.300-2.400-3.300 h-1.400 v1.900 c0 1.400-1.100 2.500-2.500 2.500 H5.900 c-1.100 0-2 .9-2 2 v2.600 C3.900 13.800 5 15 8.100 15z" fill="#f1c83c" stroke="#3c3f41" stroke-width="1.200" paint-order="stroke"/><path d="M7.900 1 C5 1 4.600 2.200 4.600 3.300 V5 h3.500 v.7 H3.200 C1.800 5.700 .6 6.800 .6 9 s1.100 3.300 2.400 3.300 h1.400 v-1.900 c0-1.400 1.100-2.500 2.500-2.500 h3.200 c1.100 0 2-.9 2-2 V3.300 C12.100 2.200 11 1 7.900 1z" fill="#5aa3d6"/></g></svg>
<div class="r" style="left:1836px;top:60px;width:10px;height:24px;background:linear-gradient(90deg,rgba(60,63,65,0),#3c3f41);"></div>
<svg class="r" style="left:1854px;top:66.3px;" width="10" height="8" viewBox="0 0 10 8"><path d="M1 2 L5 6 L9 2" fill="none" stroke="#c4c6c8" stroke-width="1.5"/></svg>
<svg class="r" style="left:1883px;top:63px;" width="4" height="16" viewBox="0 0 4 16"><circle cx="2" cy="3.300" r="1.600" fill="#c4c6c8"/><circle cx="2" cy="8" r="1.600" fill="#c4c6c8"/><circle cx="2" cy="12.700" r="1.600" fill="#c4c6c8"/></svg>
<div class="r" style="left:537px;top:84px;width:1092px;height:1px;background:#323232;"></div>
<div class="r" style="left:1815px;top:84px;width:83px;height:1px;background:#323232;"></div>
<div class="r" style="left:537px;top:85px;width:1361px;height:524px;background:#2b2b2b;"></div>
<div class="r" style="left:537px;top:85px;width:67px;height:524px;background:#313335;"></div>
<div class="r" style="left:604px;top:85px;width:1px;height:524px;background:#555759;"></div>
<div class="r" style="left:605px;top:282.4px;width:1293px;height:33.6px;background:#323232;"></div>
<div class="r" style="left:793px;top:282.4px;width:71.2px;height:33.6px;background:#214283;"></div>
<div class="t m" style="left:542px;top:88.0px;line-height:30px;color:#606366">1</div>
<div class="t m" style="left:542px;top:121.0px;line-height:30px;color:#606366">2</div>
<div class="t m" style="left:542px;top:154.0px;line-height:30px;color:#606366">3</div>
<div class="t m" style="left:542px;top:187.0px;line-height:30px;color:#606366">4</div>
<div class="t m" style="left:542px;top:220.0px;line-height:30px;color:#606366">5</div>
<div class="t m" style="left:542px;top:253.0px;line-height:30px;color:#606366">6</div>
<div class="t m" style="left:542px;top:286.0px;line-height:30px;color:#a4a3a3">7</div>
<div class="t m" style="left:542px;top:319.0px;line-height:30px;color:#606366">8</div>
<div class="t m" style="left:542px;top:352.0px;line-height:30px;color:#606366">9</div>
<div class="t m code" style="left:613px;top:88.5px;line-height:30px;"><span class="k">from</span> langchain_ollama <span class="k">import</span> OllamaLLM</div>
<div class="t m code" style="left:613px;top:154.5px;line-height:30px;"><span class="cm"># <span class="c">创建模型</span></span></div>
<div class="t m code" style="left:613px;top:187.5px;line-height:30px;">model = OllamaLLM(<span class="p">model</span>=<span class="s">"qwen3:4b"</span>)</div>
<div class="t m code" style="left:613px;top:253.5px;line-height:30px;"><span class="cm"># <span class="c">调用模型</span></span></div>
<div class="t m code" style="left:613px;top:286.5px;line-height:30px;">result = model.invoke(<span class="p">input</span>=<span class="s">"<span class="c">你是谁？</span>"</span>)</div>
<div class="t m code" style="left:613px;top:319.5px;line-height:30px;"><span class="bi">print</span>(result)</div>
<div class="r" style="left:864.2px;top:286px;width:1.9px;height:27px;background:#d4d4dc;"></div>
<svg class="r" style="left:561px;top:287px;" width="24" height="24" viewBox="0 0 24 24"><defs><linearGradient id="lg1" x1="0" y1="1" x2="1" y2="0"><stop offset="0" stop-color="#4d2fd6"/><stop offset=".55" stop-color="#6247e6"/><stop offset="1" stop-color="#9a90f2"/></linearGradient></defs><path d="M10.66 1.08 L14.89 5.19 L20.78 5.38 L19.34 11.10 L22.13 16.30 L16.45 17.91 L13.34 22.92 L9.11 18.81 L3.22 18.62 L4.66 12.90 L1.87 7.70 L7.55 6.09Z" fill="url(#lg1)" stroke="url(#lg1)" stroke-width="1.600" stroke-linejoin="round"/><path transform="rotate(0 12 12)" d="M9.400 2.800 L7.700 7.600 H21.200" fill="none" stroke="#fff" stroke-width="2.3" stroke-linejoin="miter"/><path transform="rotate(120 12 12)" d="M9.400 2.800 L7.700 7.600 H21.200" fill="none" stroke="#fff" stroke-width="2.3" stroke-linejoin="miter"/><path transform="rotate(240 12 12)" d="M9.400 2.800 L7.700 7.600 H21.200" fill="none" stroke="#fff" stroke-width="2.3" stroke-linejoin="miter"/></svg>
<svg class="r" style="left:1878px;top:91px;" width="13" height="12" viewBox="0 0 13 12"><path d="M1 6.500 L4.500 10 L12 2" fill="none" stroke="#499c54" stroke-width="2.400"/></svg>
<div class="r" style="left:1883px;top:309px;width:14px;height:2px;background:#357a3f;"></div>
<svg class="r" style="left:809.6px;top:296px;" width="14" height="21" viewBox="0 0 14 21"><path d="M1 1 V16.500 L4.800 13 L7.500 19.500 L10 18.500 L7.300 12.200 H12.500 Z" fill="#fff" stroke="#000" stroke-width="1.100" stroke-linejoin="round"/></svg>
<div class="r" style="left:537px;top:609px;width:1361px;height:1px;background:#555759;"></div>
<div class="r" style="left:537px;top:610px;width:1361px;height:23px;background:#313335;"></div>
<div class="r" style="left:37px;top:633px;width:1861px;height:1px;background:#323537;"></div>
<div class="t " style="left:43.5px;top:638.0px;line-height:20px;;font-size:12.0px;letter-spacing:-0.246px">Run:</div>
<svg class="r" style="left:88px;top:640px;opacity:0.85;" width="15" height="15" viewBox="0 0 16 16"><path d="M7.9 1 C5 1 4.6 2.2 4.6 3.3 V5 h3.5 v.7 H3.2 C1.8 5.700 .6 6.800 .6 9 s1.100 3.300 2.400 3.300 h1.400 v-1.900 c0-1.400 1.100-2.500 2.500-2.500 h3.200 c1.100 0 2-.9 2-2 V3.300 C12.100 2.200 11 1 7.900 1z" fill="#3d7fb5"/><circle cx="6.2" cy="3" r=".7" fill="#3c3f41"/><path d="M8.100 15 c2.900 0 3.300-1.200 3.300-2.300 V11 H7.900 v-.7 h4.900 c1.400 0 2.600-1.100 2.600-3.300 s-1.100-3.300-2.400-3.300 h-1.400 v1.900 c0 1.400-1.100 2.500-2.500 2.500 H5.900 c-1.100 0-2 .9-2 2 v2.600 C3.900 13.800 5 15 8.100 15z" fill="#e5b93a"/><circle cx="9.8" cy="13" r=".7" fill="#3c3f41"/></svg>
<div class="t " style="left:107.5px;top:638.0px;line-height:20px;;font-size:12.5px;letter-spacing:-0.276px"><span class="c">使用流式输出</span></div>
<svg class="r" style="left:186px;top:643.5px;" width="8" height="8" viewBox="0 0 8 8"><path d="M.5 .5 L7.5 7.5 M7.5 .5 L.5 7.5" stroke="#6e7173" stroke-width="1.1"/></svg>
<div class="r" style="left:75px;top:657px;width:130px;height:3px;background:#747a80;"></div>
<svg class="r" style="left:1851px;top:640.5px;" width="14" height="14" viewBox="0 0 14 14"><path d="M5.00 2.75 L5.55 2.53 L5.72 0.52 L8.28 0.52 L8.45 2.53 L9.68 3.14 L10.14 3.51 L11.97 2.66 L13.25 4.87 L11.60 6.02 L11.68 7.39 L11.60 7.98 L13.25 9.13 L11.97 11.34 L10.14 10.49 L9.00 11.25 L8.45 11.47 L8.28 13.48 L5.72 13.48 L5.55 11.47 L4.32 10.86 L3.86 10.49 L2.03 11.34 L0.75 9.13 L2.40 7.98 L2.32 6.61 L2.40 6.02 L0.75 4.87 L2.03 2.66 L3.86 3.51Z" fill="#d0d2d4" stroke="#d0d2d4" stroke-width=".6" stroke-linejoin="round"/><circle cx="7" cy="7" r="2" fill="#3c3f41"/></svg>
<div class="r" style="left:1878px;top:646px;width:12px;height:2px;background:#d0d2d4;"></div>
<div class="r" style="left:37px;top:660px;width:1861px;height:1px;background:#323232;"></div>
<div class="r" style="left:65px;top:661px;width:1px;height:375px;background:#323537;"></div>
<div class="r" style="left:94.5px;top:661px;width:1803.5px;height:375px;background:#2b2b2b;"></div>
<svg class="r" style="left:45px;top:668px;" width="13" height="14" viewBox="0 0 13 14"><path d="M1 1 L12 7 L1 13 Z" fill="#499c54"/></svg>
<svg class="r" style="left:43px;top:693px;" width="16" height="16" viewBox="0 0 16 16"><path d="M14 3.500 L11.500 6 L10 4.500 L12.500 2 C11 1.200 9 1.500 8 2.800 C7 4 7 5.500 7.500 6.500 L1.500 12.500 C1 13.200 1 14 1.700 14.500 C2.300 15 3 15 3.500 14.500 L9.500 8.500 C10.500 9 12 9 13.200 8 C14.500 7 14.800 5 14 3.500z" fill="#afb1b3"/></svg>
<div class="r" style="left:41px;top:717px;width:20px;height:1px;background:#515354;"></div>
<div class="r" style="left:46px;top:729px;width:10px;height:10px;background:#5a5a5a;"></div>
<div class="r" style="left:41px;top:750px;width:20px;height:1px;background:#515354;"></div>
<svg class="r" style="left:45.2px;top:762px;" width="12" height="10" viewBox="0 0 12 10"><rect x="0" y="0" width="6.600" height="4.300" fill="#c8cacc"/><rect x="8.100" y="0" width="3.900" height="4.300" fill="#c8cacc"/><rect x="0" y="5.800" width="12" height="4.200" fill="#c8cacc"/></svg>
<div class="r" style="left:41px;top:783px;width:20px;height:1px;background:#515354;"></div>
<svg class="r" style="left:43px;top:792px;" width="16" height="16" viewBox="0 0 16 16"><path d="M9.500 1 L15 6.500 L13.500 7.200 L11.500 6.500 L9 9 C9.500 10.500 9 12 8 13 L3 8 C4 7 5.500 6.500 7 7 L9.500 4.500 L8.800 2.500 Z" fill="#afb1b3"/><path d="M5.500 10.500 L1 15" stroke="#afb1b3" stroke-width="1.600"/></svg>
<svg class="r" style="left:74px;top:669px;" width="12" height="14" viewBox="0 0 12 14"><path d="M6 13 V2 M1.500 6.500 L6 2 L10.500 6.500" fill="none" stroke="#5e6163" stroke-width="1.600"/></svg>
<svg class="r" style="left:74px;top:695px;" width="12" height="14" viewBox="0 0 12 14"><path d="M6 1 V12 M1.500 7.500 L6 12 L10.500 7.500" fill="none" stroke="#5e6163" stroke-width="1.600"/></svg>
<svg class="r" style="left:73px;top:721px;" width="15" height="14" viewBox="0 0 15 14"><path d="M1 2 H13 M1 7 H11 C14.500 7 14.500 12 11 12 H8 M1 12 H4" fill="none" stroke="#d0d2d4" stroke-width="1.600"/><path d="M9.500 9.500 L7 12 L9.500 14.500" fill="#d0d2d4" stroke="#d0d2d4" stroke-width="1"/></svg>
<div class="r" style="left:69px;top:743px;width:22px;height:22px;border-radius:3px;background:#5a5d60"></div>
<svg class="r" style="left:73px;top:746px;" width="15" height="15" viewBox="0 0 15 15"><path d="M1 3 H5 M1 7.500 H5 M1 13 H14" stroke="#d0d2d4" stroke-width="1.700"/><path d="M10 1 V9 M6.500 6 L10 9.800 L13.500 6" fill="none" stroke="#d0d2d4" stroke-width="1.700"/></svg>
<svg class="r" style="left:73px;top:773px;" width="15" height="15" viewBox="0 0 15 15"><path d="M3.500 1 H11.500 V4 H3.500Z" fill="#d0d2d4"/><path d="M1 5 H14 V11 H11.500 V8.500 H3.500 V11 H1Z" fill="#d0d2d4"/><path d="M4.500 9.800 H10.500 V13.500 H4.500Z" fill="none" stroke="#d0d2d4" stroke-width="1.400"/></svg>
<svg class="r" style="left:74.5px;top:799px;" width="11" height="13" viewBox="0 0 11 13"><path d="M3.800 0 H7.200 V1.300 H10.700 V3 H.3 V1.300 H3.800Z" fill="#c8cacc"/><path d="M1.200 3.900 H9.800 V12.800 H1.200Z" fill="#c8cacc"/></svg>
<div class="t m" style="left:111.5px;top:664.5px;line-height:30px;">D:\python_pro\RAGPro2\venv\Scripts\python.exe D:\python_pro\RAGPro2\<span class="c">基于</span>LangChain<span class="c">实现</span>RAG<span class="c">与</span>Agent<span class="c">智能体开发</span>\<span class="c">使用流式输出</span>.py</div>
<div class="r" style="left:95px;top:695px;width:1803px;height:34px;overflow:hidden"><div class="t m" style="left:16.500px;top:2.300px;line-height:30px"><span class="c">你好！我是通义千问（</span>Qwen<span class="c">），阿里巴巴集团旗下的超大规模语言模型。我可以回答问题、创作文字，比如写故事、写公文、写邮件、写剧本、逻辑推理、编程等等，还能表达观点，玩游戏等。如果你有任何问题或需要帮助，欢迎随时告诉我！</span></div></div>
<div class="t m" style="left:111.5px;top:729.5px;line-height:30px;">Process finished with exit code 0</div>
<div class="r" style="left:112px;top:1027px;width:1444px;height:8px;background:#4b4d4f;"></div>
<div class="r" style="left:15px;top:1036px;width:1905px;height:1px;background:#323232;"></div>
<div class="r" style="left:158px;top:1037px;width:55.5px;height:21.5px;background:#2d2f30;"></div>
<svg class="r" style="left:50px;top:1042px;" width="9" height="13" viewBox="0 0 9 13"><circle cx="2" cy="2" r="1.600" fill="#afb1b3"/><circle cx="2" cy="11" r="1.600" fill="#afb1b3"/><circle cx="7.500" cy="3.500" r="1.600" fill="#afb1b3"/><path d="M2 2 V11 M2 8.500 C6 8 7.500 7 7.500 3.500" fill="none" stroke="#afb1b3" stroke-width="1.800"/></svg>
<div class="t " style="left:65px;top:1039.0px;line-height:20px;;font-size:12.0px;letter-spacing:-0.107px">Version Control</div>
<svg class="r" style="left:168px;top:1043px;" width="10" height="11" viewBox="0 0 10 11"><path d="M1 .5 L9 5.500 L1 10.500 Z" fill="#d0d2d4"/></svg>
<div class="t " style="left:184px;top:1039.0px;line-height:20px;color:#e6e6e6;font-size:12.0px;letter-spacing:-0.606px">Run</div>
<svg class="r" style="left:226px;top:1042px;" width="14" height="13" viewBox="0 0 14 13"><path d="M7 .5 L13 3.500 L7 6.500 L1 3.500Z" fill="#afb1b3"/><path d="M1 6.300 L7 9.300 L13 6.300 M1 9.300 L7 12.300 L13 9.300" fill="none" stroke="#afb1b3" stroke-width="1.400"/></svg>
<div class="t " style="left:244.5px;top:1039.0px;line-height:20px;;font-size:12.0px;letter-spacing:-0.269px">Python Packages</div>
<svg class="r" style="left:357px;top:1043px;" width="11" height="10" viewBox="0 0 11 10"><path d="M0 1.500 H2 M3.500 1.500 H11 M0 5 H2 M3.500 5 H11 M0 8.500 H2 M3.500 8.500 H11" stroke="#afb1b3" stroke-width="2.100"/></svg>
<div class="t " style="left:373px;top:1039.0px;line-height:20px;;font-size:12.0px;letter-spacing:-0.844px">TODO</div>
<svg class="r" style="left:427px;top:1042px;" width="13" height="13" viewBox="0 0 16 16"><path d="M7.900 1 C5 1 4.600 2.200 4.600 3.300 V5 h3.500 v.7 H3.200 C1.800 5.700 .6 6.800 .6 9 s1.100 3.300 2.400 3.300 h1.400 v-1.900 c0-1.400 1.100-2.500 2.500-2.500 h3.200 c1.100 0 2-.9 2-2 V3.300 C12.100 2.200 11 1 7.900 1z" fill="#afb1b3"/><path d="M8.100 15 c2.900 0 3.300-1.200 3.300-2.300 V11 H7.900 v-.7 h4.900 c1.400 0 2.600-1.100 2.600-3.300 s-1.100-3.300-2.400-3.300 h-1.400 v1.900 c0 1.400-1.100 2.500-2.500 2.500 H5.900 c-1.100 0-2 .9-2 2 v2.600 C3.900 13.800 5 15 8.100 15z" fill="#afb1b3"/></svg>
<div class="t " style="left:444px;top:1039.0px;line-height:20px;;font-size:12.0px;letter-spacing:-0.128px">Python Console</div>
<svg class="r" style="left:550px;top:1043px;" width="11" height="11" viewBox="0 0 11 11"><circle cx="5.500" cy="5.500" r="5.500" fill="#afb1b3"/><path d="M5.500 2 V6.500" stroke="#3c3f41" stroke-width="1.800"/><circle cx="5.500" cy="8.500" r="1" fill="#3c3f41"/></svg>
<div class="t " style="left:567.5px;top:1039.0px;line-height:20px;;font-size:12.0px;letter-spacing:-0.292px">Problems</div>
<svg class="r" style="left:638px;top:1043px;" width="12" height="11" viewBox="0 0 12 11"><rect x="0" y="0" width="12" height="11" fill="#afb1b3"/><path d="M2 3.500 L4.500 5.500 L2 7.500 M6 8 H9.500" stroke="#3c3f41" stroke-width="1.200" fill="none"/></svg>
<div class="t " style="left:654px;top:1039.0px;line-height:20px;;font-size:12.0px;letter-spacing:-0.115px">Terminal</div>
<svg class="r" style="left:720px;top:1043px;" width="12" height="12" viewBox="0 0 12 12"><circle cx="6" cy="6" r="5.500" fill="#afb1b3"/><path d="M4.500 3 L9 6 L4.500 9 Z" fill="#3c3f41"/></svg>
<div class="t " style="left:737.5px;top:1039.0px;line-height:20px;;font-size:12.0px;letter-spacing:-0.602px">Services</div>
<div class="r" style="left:15px;top:1058.5px;width:1905px;height:1px;background:#35383a;"></div>
<svg class="r" style="left:27px;top:1063px;" width="13" height="13" viewBox="0 0 13 13"><path d="M2.500 .5 H12 V10 H2.500Z M.5 3 V12.500 H10" fill="none" stroke="#afb1b3" stroke-width="1"/></svg>
<div class="t " style="left:54px;top:1059.0px;line-height:20px;;font-size:13.0px;letter-spacing:0.037px">Localized PyCharm 2023.1.3 is available // Switch and restart // Don't ask again (5 minutes ago)</div>
<svg class="r" style="left:1459.5px;top:1059px;" width="19" height="19" viewBox="0 0 24 24"><defs><linearGradient id="lg2" x1="0" y1="1" x2="1" y2="0"><stop offset="0" stop-color="#4d2fd6"/><stop offset=".55" stop-color="#6247e6"/><stop offset="1" stop-color="#9a90f2"/></linearGradient></defs><path d="M10.66 1.08 L14.89 5.19 L20.78 5.38 L19.34 11.10 L22.13 16.30 L16.45 17.91 L13.34 22.92 L9.11 18.81 L3.22 18.62 L4.66 12.90 L1.87 7.70 L7.55 6.09Z" fill="url(#lg2)" stroke="url(#lg2)" stroke-width="1.600" stroke-linejoin="round"/><path transform="rotate(0 12 12)" d="M9.400 2.800 L7.700 7.600 H21.200" fill="none" stroke="#fff" stroke-width="2.3" stroke-linejoin="miter"/><path transform="rotate(120 12 12)" d="M9.400 2.800 L7.700 7.600 H21.200" fill="none" stroke="#fff" stroke-width="2.3" stroke-linejoin="miter"/><path transform="rotate(240 12 12)" d="M9.400 2.800 L7.700 7.600 H21.200" fill="none" stroke="#fff" stroke-width="2.3" stroke-linejoin="miter"/></svg>
<div class="t " style="left:1489px;top:1059.0px;line-height:20px;;font-size:12.5px;letter-spacing:0.028px">7:22 (6 chars)</div>
<div class="t " style="left:1579px;top:1059.0px;line-height:20px;;font-size:12.0px;letter-spacing:-0.955px">CRLF</div>
<div class="t " style="left:1619.5px;top:1059.0px;line-height:20px;;font-size:12.0px;letter-spacing:-0.111px">UTF-8</div>
<div class="t " style="left:1665px;top:1059.0px;line-height:20px;;font-size:12.5px;letter-spacing:0.062px">4 spaces</div>
<div class="t " style="left:1728px;top:1059.0px;line-height:20px;;font-size:12.5px;letter-spacing:-0.029px">Python 3.11 (RAGPro2)</div>
<svg class="r" style="left:1868.3px;top:1062px;" width="14" height="13" viewBox="0 0 14 13"><path d="M1.500 6 V3.500 C1.500 .5 6.500 .5 6.500 3.500" fill="none" stroke="#afb1b3" stroke-width="1.600"/><rect x="4.500" y="6" width="8.500" height="7" fill="#afb1b3"/></svg>
<svg class="r" style="left:1895px;top:1062.5px;" width="12" height="12" viewBox="0 0 12 12"><circle cx="6" cy="6" r="6" fill="#5e5f5f"/><path d="M6 2.300 V7" stroke="#3c3f41" stroke-width="1.900"/><circle cx="6" cy="9.300" r="1.100" fill="#3c3f41"/></svg>
<div class="r" style="left:1897.2px;top:58px;width:1px;height:978px;background:#323537;"></div>
<svg class="r" style="left:1901px;top:66px;" width="15" height="15" viewBox="0 0 24 24"><path d="M10.66 1.08 L14.89 5.19 L20.78 5.38 L19.34 11.10 L22.13 16.30 L16.45 17.91 L13.34 22.92 L9.11 18.81 L3.22 18.62 L4.66 12.90 L1.87 7.70 L7.55 6.09Z" fill="#d4d6d8" stroke="#d4d6d8" stroke-width="1.600" stroke-linejoin="round"/><path transform="rotate(0 12 12)" d="M9.400 2.800 L7.700 7.600 H21.200" fill="none" stroke="#3c3f41" stroke-width="1.7" stroke-linejoin="miter"/><path transform="rotate(120 12 12)" d="M9.400 2.800 L7.700 7.600 H21.200" fill="none" stroke="#3c3f41" stroke-width="1.7" stroke-linejoin="miter"/><path transform="rotate(240 12 12)" d="M9.400 2.800 L7.700 7.600 H21.200" fill="none" stroke="#3c3f41" stroke-width="1.7" stroke-linejoin="miter"/></svg>
<div class="v" style="left:1914.5px;top:85px;transform:rotate(90deg);font-size:11.5px;letter-spacing:-0.003px;">Lingma</div>
<svg class="r" style="left:1903px;top:144px;" width="11" height="13" viewBox="0 0 11 13"><ellipse cx="5.500" cy="2.200" rx="5.300" ry="2" fill="#b4b6b8"/><path d="M.2 3.800 c0 2.600 10.600 2.600 10.600 0 v1.800 c0 2.600-10.600 2.600-10.600 0z M.2 6.800 c0 2.600 10.600 2.600 10.600 0 v1.800 c0 2.600-10.600 2.600-10.600 0z M.2 9.800 c0 2.600 10.600 2.600 10.600 0 v1.200 c0 2.600-10.600 2.600-10.600 0z" fill="#b4b6b8"/></svg>
<div class="v" style="left:1914.5px;top:161.7px;transform:rotate(90deg);font-size:11.5px;letter-spacing:-0.351px;">Database</div>
<svg class="r" style="left:1902px;top:232px;" width="11" height="10" viewBox="0 0 11 10"><path d="M0 1.500 H2.500 M4 1.500 H6.500 M8 1.500 H10.500 M0 5 H2.500 M4 5 H6.500 M8 5 H10.500 M0 8.500 H2.500 M4 8.500 H6.500 M8 8.500 H10.500" stroke="#afb1b3" stroke-width="2.200"/></svg>
<div class="v" style="left:1914.5px;top:248px;transform:rotate(90deg);font-size:11.5px;letter-spacing:-0.308px;">SciView</div>
<svg class="r" style="left:1902.3px;top:307.5px;" width="14" height="14" viewBox="0 0 14 14"><path d="M6 2 C3.500 2 2.500 4 2.500 6 V9 L1 10.500 H11 L9.500 9 V6 C9.500 4 8.500 2 6 2z" fill="#afb1b3"/><circle cx="6" cy="12" r="1.300" fill="#afb1b3"/><circle cx="10.500" cy="2.800" r="2.500" fill="#e05555"/></svg>
<div class="v" style="left:1914.5px;top:325px;transform:rotate(90deg);font-size:11.5px;letter-spacing:0.469px;">Notifications</div>
</div></div>
<div class="r" style="left:866px;top:329px;width:303px;height:64px;border-radius:6px;background:#fff;box-shadow:0 0 2px rgba(0,0,0,.4)"></div>
<div class="t " style="left:881px;top:335.0px;line-height:20px;color:#111;font-size:15px">s</div>
<div class="r" style="left:888.5px;top:338px;width:1px;height:15px;background:#222;"></div>
<div class="r" style="left:1137px;top:335px;width:20px;height:20px;border-radius:50%;background:#f3f3f3;box-shadow:0 0 1px #ccc"></div>
<svg class="r" style="left:1137px;top:335px;" width="22" height="20" viewBox="0 0 22 20"><rect x="2.500" y="5.500" width="7" height="5" rx="2" fill="#e8642c"/><rect x="10" y="5.500" width="7" height="5" rx="2" fill="#e8642c"/><path d="M2 6 H17.500" stroke="#e8642c" stroke-width="1.400"/><path d="M4.500 7 L6.500 8.500" stroke="#5a2a10" stroke-width="1"/><path d="M10.500 13.500 c1 1 2.500 1 3.500-.3" fill="none" stroke="#4a3020" stroke-width="1"/><path d="M19 3.500 l.8 1.700 1.700 .8 -1.700 .8 -.8 1.700 -.8-1.700 -1.700-.8 1.700-.8z" fill="#f7d34a"/></svg>
<div class="t " style="left:881.5px;top:358.0px;line-height:24px;"><span style="color:#f2a088;font-size:12.500px;position:relative;top:-1.500px">1</span><span style="color:#e06a32;font-size:17.500px;margin-left:4.8px;font-family:'Noto Sans CJK SC',sans-serif">是</span></div>
<div class="t " style="left:925.5px;top:358.0px;line-height:24px;"><span style="color:#5a5f6e;font-size:12.500px;position:relative;top:-1.500px">2</span><span style="color:#111;font-size:17.500px;margin-left:4.8px;font-family:'Noto Sans CJK SC',sans-serif">商</span></div>
<div class="t " style="left:969.5px;top:358.0px;line-height:24px;"><span style="color:#5a5f6e;font-size:12.500px;position:relative;top:-1.500px">3</span><span style="color:#111;font-size:17.500px;margin-left:4.8px;font-family:'Noto Sans CJK SC',sans-serif">生</span></div>
<div class="t " style="left:1013.5px;top:358.0px;line-height:24px;"><span style="color:#5a5f6e;font-size:12.500px;position:relative;top:-1.500px">4</span><span style="color:#111;font-size:17.500px;margin-left:4.8px;font-family:'Noto Sans CJK SC',sans-serif">扫</span></div>
<div class="t " style="left:1057.5px;top:358.0px;line-height:24px;"><span style="color:#5a5f6e;font-size:12.500px;position:relative;top:-1.500px">5</span><span style="color:#111;font-size:17.500px;margin-left:0px;font-family:'Noto Sans CJK SC',sans-serif">↑</span></div>
<svg class="r" style="left:1096px;top:367px;" width="8" height="10" viewBox="0 0 8 10"><path d="M6 1 L2 5 L6 9" fill="none" stroke="#c8c8c8" stroke-width="1.400"/></svg>
<svg class="r" style="left:1118px;top:367px;" width="8" height="10" viewBox="0 0 8 10"><path d="M2 1 L6 5 L2 9" fill="none" stroke="#333" stroke-width="1.400"/></svg>
<svg class="r" style="left:1142px;top:369px;" width="10" height="8" viewBox="0 0 10 8"><path d="M1 2 L5 6 L9 2" fill="none" stroke="#333" stroke-width="1.400"/></svg>
<div class="r" style="left:1796.500px;top:988px;width:46.500px;height:46.500px;border-radius:50%;background:radial-gradient(circle at 50% 35%,#aee3fb,#8ed1f5);box-shadow:0 0 0 2px #f0f9fe"></div>
<div class="r" style="left:1797.500px;top:989px;width:43.500px;height:43.500px;border-radius:50%;border:.5px dashed #6fb6e6"></div>
<div class="t " style="left:1801.5px;top:1002.0px;line-height:20px;color:#eefaff;font-size:14.200px">01:58</div>
<div class="r" style="left:1745px;top:921px;width:156px;height:64px;border-radius:12px;background:linear-gradient(100deg,#aee0f5 0,#b5ecf1 45%,#dff7f1 85%,#e8f8f4 100%)"></div>
<div class="r" style="left:1790px;top:956px;width:105px;height:24px;border-radius:10px;background:rgba(255,255,255,.35)"></div>
<div class="r" style="left:1716px;top:917px;width:72px;height:72px;border-radius:50%;background:radial-gradient(circle,#f2f4fb 0,#eceffb 62%,#d3daf6 100%)"></div>
<div class="r" style="left:1724px;top:925px;width:50.500px;height:50.500px;border-radius:50%;border:2.700px solid #8fdcc4;border-right-color:#4fb3cb;border-bottom-color:#4fb3cb;background:linear-gradient(180deg,#fbfcff 30%,#d6e8f6)"></div>
<div class="t b" style="left:1735px;top:940.0px;line-height:24px;color:#333;font-size:21px;letter-spacing:-.3px">49<span style="font-size:12px">%</span></div>
<svg class="r" style="left:1800px;top:929px;" width="18" height="18" viewBox="0 0 18 18"><path d="M3.500 14 V4 L14.500 14 V4" fill="none" stroke="#d0243c" stroke-width="1.600"/><circle cx="9" cy="1.800" r="1.500" fill="#111"/><circle cx="9" cy="16.200" r="1.500" fill="#111"/><circle cx="9" cy="9" r="1.300" fill="#d0243c"/><circle cx="3.500" cy="4" r="1.500" fill="#d0243c"/><circle cx="14.500" cy="14" r="1.500" fill="#d0243c"/><circle cx="3.500" cy="14" r="1.500" fill="#d0243c"/><circle cx="14.500" cy="4" r="1.500" fill="#d0243c"/></svg>
<div class="t b" style="left:1823px;top:928.0px;line-height:20px;color:#222;font-size:12px"><span class="c">纳米</span>AI</div>
<svg class="r" style="left:1798px;top:961px;" width="9" height="10" viewBox="0 0 9 10"><path d="M4.500 9.500 V1 M1 4.500 L4.500 1 L8 4.500" fill="none" stroke="#3b8fe0" stroke-width="1.300"/></svg>
<div class="t " style="left:1809px;top:956.5px;line-height:20px;color:#1a1a1a;font-size:9.600px">3K/s</div>
<svg class="r" style="left:1847px;top:961px;" width="9" height="10" viewBox="0 0 9 10"><path d="M4.500 .5 V9 M1 5.500 L4.500 9 L8 5.500" fill="none" stroke="#2fb05a" stroke-width="1.300"/></svg>
<div class="t " style="left:1858.5px;top:956.5px;line-height:20px;color:#1a1a1a;font-size:9.400px">1.5K/s</div>
<div class="r" style="left:1697px;top:975px;width:220px;height:28.700px;border-radius:6px;background:#fff"></div>
<div class="t b" style="left:1704px;top:975.0px;line-height:28px;color:#f07a1e;font-size:23px;font-style:italic;transform:scaleX(1.350);transform-origin:0 50%">S</div>
<div class="r" style="left:1733px;top:981px;width:1px;height:18px;background:#d8d8d8;"></div>
<div class="t " style="left:1743px;top:975.5px;line-height:24px;"><span style="font-family:'Noto Sans CJK SC',sans-serif;font-size:17.500px;color:#111;font-weight:500">中</span></div>
<svg class="r" style="left:1772px;top:981px;" width="14" height="18" viewBox="0 0 14 18"><circle cx="4.300" cy="4.400" r="2.400" fill="none" stroke="#111" stroke-width="1.500"/><path d="M10 9.500 c1.500 0 2 1.500 1.500 3 c-.4 1.300-1.300 2.300-2.500 2.800 c.6-.9 .8-1.600 .6-2.400 c-1-.3-1.300-1.200-1.100-2 c.2-.8 .8-1.400 1.500-1.400z" fill="#111"/></svg>
<svg class="r" style="left:1798px;top:980.5px;" width="16" height="19" viewBox="0 0 16 19"><rect x="5" y="1" width="6" height="10.500" rx="3" fill="none" stroke="#111" stroke-width="1.600"/><path d="M2 8.500 c0 3.500 2.500 5.500 6 5.500 s6-2 6-5.500 M8 14 V17.500" fill="none" stroke="#111" stroke-width="1.600"/></svg>
<svg class="r" style="left:1829.5px;top:981px;" width="17" height="16" viewBox="0 0 17 16"><rect x="1" y="1" width="15" height="14" rx="2" fill="none" stroke="#111" stroke-width="1.600"/><path d="M4.200 4.800 H5.700 M7.800 4.800 H9.300 M11.400 4.800 H12.900 M4.200 7.700 H5.700 M7.800 7.700 H9.300 M11.400 7.700 H12.900 M4.800 11.300 H12.300" stroke="#111" stroke-width="1.500"/></svg>
<svg class="r" style="left:1859.5px;top:981px;" width="19" height="17" viewBox="0 0 19 17"><path d="M6.200 2.500 C7.700 4.500 11.300 4.500 12.800 2.500 L17.500 5.300 L15.700 8.600 L13.800 7.700 V15.500 H5.200 V7.700 L3.300 8.600 L1.500 5.300 Z" fill="none" stroke="#111" stroke-width="1.600" stroke-linejoin="round"/></svg>
<div class="r" style="left:1874px;top:977.500px;width:7px;height:7px;border-radius:50%;background:#e8553a"></div>
<div class="t " style="left:1891px;top:977.5px;line-height:24px;color:#111;font-size:19px">A<span style="font-size:17.500px">ı</span></div>
<svg class="r" style="left:1902.8px;top:980.5px;" width="6" height="6" viewBox="0 0 6 6"><path d="M3 0 L4 2 L6 3 L4 4 L3 6 L2 4 L0 3 L2 2Z" fill="#111"/></svg>
<div class="t " style="left:1723.5px;top:1045.0px;line-height:22px;font-family:'Liberation Serif',serif;font-style:italic;font-weight:bold;color:#f01818;font-size:19.0px;letter-spacing:2.048px">www.java1234.com</div>
</body></html>
